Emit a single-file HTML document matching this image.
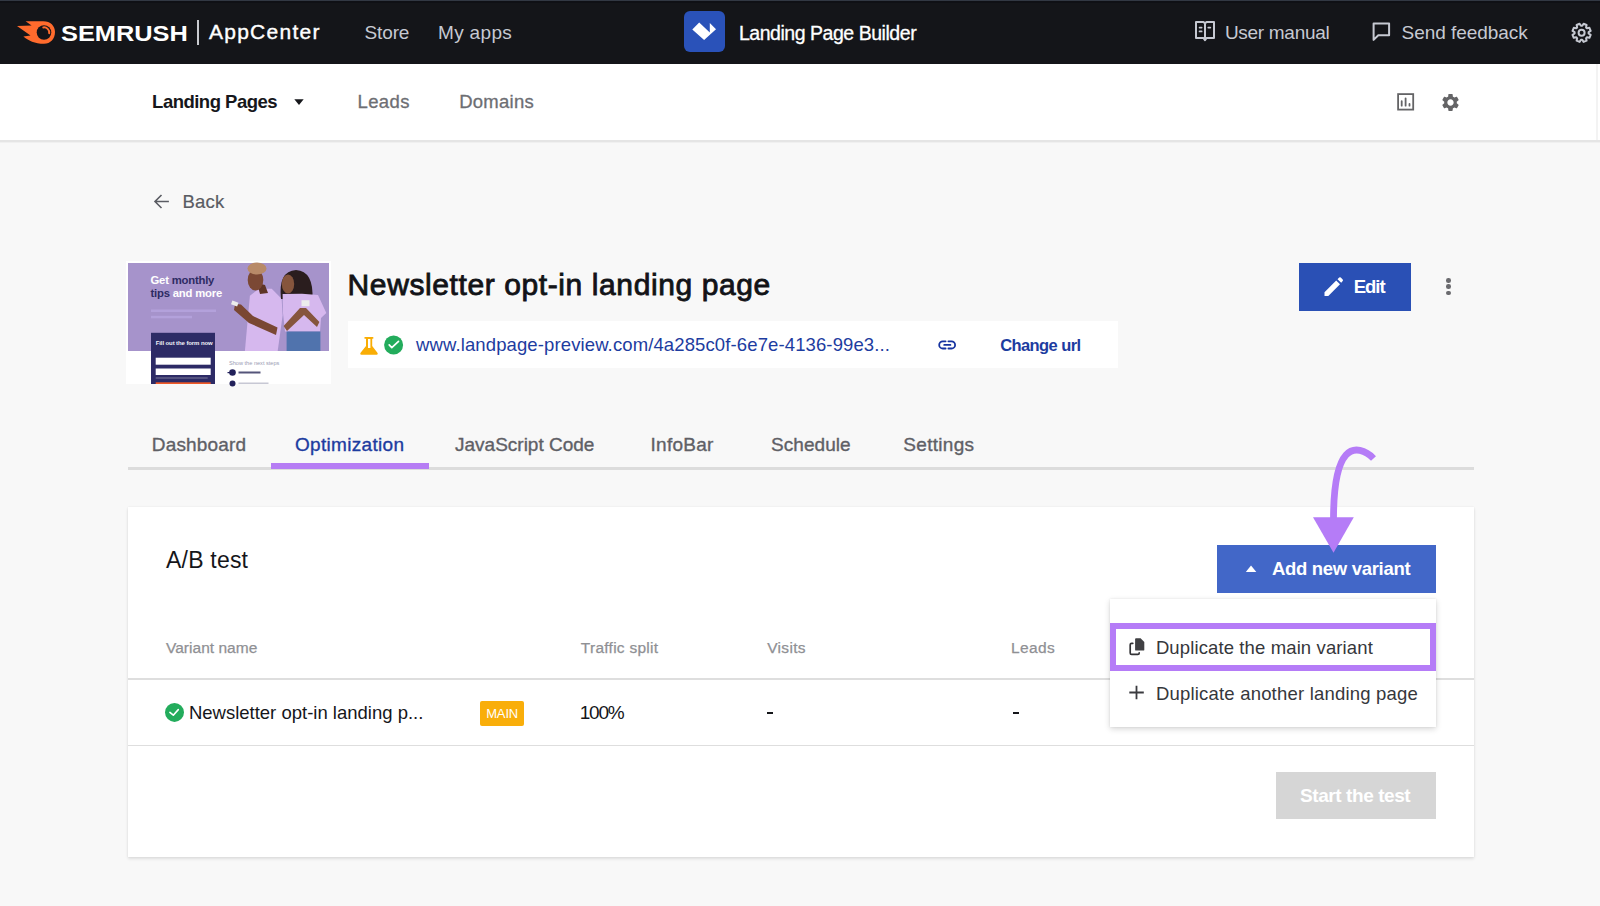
<!DOCTYPE html>
<html><head><meta charset="utf-8">
<style>
*{margin:0;padding:0;box-sizing:border-box}
html,body{width:1600px;height:906px;overflow:hidden;background:#f8f8f8;font-family:"Liberation Sans",sans-serif;position:relative}
.a{position:absolute}
.t{position:absolute;white-space:nowrap;line-height:1}
svg{position:absolute;overflow:visible}
</style></head><body>
<!-- top bar -->
<div class="a" style="left:0;top:0;width:1600px;height:64px;background:#141519"></div>
<div class="a" style="left:0;top:0;width:1600px;height:1px;background:#323843"></div>
<div class="a" style="left:0;top:1px;width:1600px;height:2px;background:#0f1015"></div>
<svg style="left:0;top:0" width="70" height="64" viewBox="0 0 70 64">
  <path d="M25.6 21.3 L43.3 21.3 C50.5 21.3 55 26 55 32 C55 38.8 50.5 43.8 44 43.8 C35 43.8 28 40.5 23.4 36.5 L30.5 35.6 L17 26.1 L31.6 25.6 Z" fill="#ff6b2d"/>
  <circle cx="44" cy="32.5" r="7.3" fill="#141519"/>
  <path d="M43.3 27.4 A5.2 5.2 0 0 1 49.2 33.2" stroke="#ff6b2d" stroke-width="2" fill="none" stroke-linecap="round"/>
</svg>
<div class="a" style="left:197px;top:20px;width:2px;height:25px;background:#c9cbd0"></div>
<!-- app icon -->
<div class="a" style="left:684px;top:11px;width:41px;height:41px;background:#2a52b9;border-radius:6px"></div>
<svg style="left:0;top:0" width="1" height="1">
  <path d="M692.3 29.4 L699.2 22.5 L709.8 32.6 L709.8 22.9 L716 29.2 L704.1 39.9 Z" fill="#fff"/>
</svg>
<!-- book icon -->
<svg style="left:0;top:0" width="1" height="1">
  <path d="M1196 22.1 H1203.5 L1205 23.3 L1206.5 22.1 H1214 V37.9 H1206.6 L1205 40.2 L1203.4 37.9 H1196 Z M1205 23.3 V38.3" fill="none" stroke="#c6c9d2" stroke-width="2" stroke-linejoin="round"/>
  <path d="M1199.6 27.6 H1201.6 M1199.6 31.4 H1201.6 M1208.3 27.6 H1210.3" stroke="#c6c9d2" stroke-width="1.8" stroke-linecap="round"/>
</svg>
<!-- chat icon -->
<svg style="left:0;top:0" width="1" height="1">
  <path d="M1373.6 23.6 H1389.1 V35.3 H1378.3 L1373.6 39.9 Z" fill="none" stroke="#c6c9d2" stroke-width="2" stroke-linejoin="round"/>
</svg>
<!-- gear top -->
<svg style="left:0;top:0" width="1" height="1">
  <path d="M1588.57 33.47 L1590.68 34.81 L1589.44 37.80 L1587.00 37.25 A7.00 7.00 0 0 1 1586.05 38.20 L1586.60 40.64 L1583.61 41.88 L1582.27 39.77 A7.00 7.00 0 0 1 1580.93 39.77 L1579.59 41.88 L1576.60 40.64 L1577.15 38.20 A7.00 7.00 0 0 1 1576.20 37.25 L1573.76 37.80 L1572.52 34.81 L1574.63 33.47 A7.00 7.00 0 0 1 1574.63 32.13 L1572.52 30.79 L1573.76 27.80 L1576.20 28.35 A7.00 7.00 0 0 1 1577.15 27.40 L1576.60 24.96 L1579.59 23.72 L1580.93 25.83 A7.00 7.00 0 0 1 1582.27 25.83 L1583.61 23.72 L1586.60 24.96 L1586.05 27.40 A7.00 7.00 0 0 1 1587.00 28.35 L1589.44 27.80 L1590.68 30.79 L1588.57 32.13 A7.00 7.00 0 0 1 1588.57 33.47 Z" fill="none" stroke="#c6c9d2" stroke-width="2" stroke-linejoin="round"/>
  <circle cx="1581.6" cy="32.8" r="3" fill="none" stroke="#c6c9d2" stroke-width="2"/>
</svg>

<!-- nav bar -->
<div class="a" style="left:0;top:64px;width:1600px;height:76px;background:#fff"></div>
<div class="a" style="left:0;top:140px;width:1600px;height:2px;background:#e5e5e5"></div>
<div class="a" style="left:0;top:142px;width:1600px;height:1px;background:#f0f0f0"></div>
<div class="a" style="left:1596px;top:64px;width:2px;height:76px;background:#f3f3f3"></div>
<svg style="left:0;top:0" width="1" height="1">
  <path d="M294.3 99.2 H303.7 L299 105 Z" fill="#16171b"/>
</svg>
<!-- chart icon -->
<svg style="left:0;top:0" width="1" height="1">
  <rect x="1398.1" y="94.1" width="15.1" height="15.5" fill="none" stroke="#646466" stroke-width="1.8"/>
  <path d="M1401.7 101.2 V105.7 M1405.6 98.3 V105.7 M1409.5 104 V105.7" stroke="#646466" stroke-width="1.8" stroke-linecap="round"/>
</svg>
<!-- gear nav -->
<svg style="left:1440.3px;top:91.9px" width="21" height="21" viewBox="0 0 24 24">
  <path d="M19.14 12.94c.04-.3.06-.61.06-.94 0-.32-.02-.64-.07-.94l2.03-1.58c.18-.14.23-.41.12-.61l-1.92-3.32c-.12-.22-.37-.29-.59-.22l-2.39.96c-.5-.38-1.03-.7-1.62-.94l-.36-2.54c-.04-.24-.24-.41-.48-.41h-3.84c-.24 0-.43.17-.47.41l-.36 2.54c-.59.24-1.13.57-1.62.94l-2.39-.96c-.22-.08-.47 0-.59.22L2.74 8.87c-.12.21-.08.47.12.61l2.03 1.58c-.05.3-.09.63-.09.94s.02.64.07.94l-2.03 1.58c-.18.14-.23.41-.12.61l1.92 3.32c.12.22.37.29.59.22l2.39-.96c.5.38 1.03.7 1.62.94l.36 2.54c.05.24.24.41.48.41h3.84c.24 0 .44-.17.47-.41l.36-2.54c.59-.24 1.13-.56 1.62-.94l2.39.96c.22.08.47 0 .59-.22l1.92-3.32c.12-.22.07-.47-.12-.61l-2.01-1.58zM12 15.6c-1.98 0-3.6-1.62-3.6-3.6s1.62-3.6 3.6-3.6 3.6 1.62 3.6 3.6-1.62 3.6-3.6 3.6z" fill="#646466"/>
</svg>

<!-- back arrow -->
<svg style="left:0;top:0" width="1" height="1">
  <path d="M168.9 201.5 H155 M161.5 195 L155 201.5 L161.5 208" fill="none" stroke="#5a5c63" stroke-width="1.6"/>
</svg>

<!-- thumbnail -->
<div class="a" style="left:126px;top:261px;width:204.5px;height:123px;background:#fff"></div>
<svg style="left:128px;top:263px" width="201" height="121" viewBox="0 0 201 121">
  <rect x="0" y="0" width="201" height="121" fill="#fff"/>
  <rect x="0" y="0" width="201" height="88" fill="#a693cb"/>
  <text x="22.5" y="20.5" font-family="Liberation Sans" font-weight="bold" font-size="11.3" fill="#fff" letter-spacing="-0.2">Get <tspan fill="#2e2b63">monthly</tspan></text>
  <text x="22.5" y="34" font-family="Liberation Sans" font-weight="bold" font-size="11.3" fill="#2e2b63" letter-spacing="-0.2">tips <tspan fill="#fff">and more</tspan></text>
  <rect x="23" y="46.5" width="65" height="2.5" fill="#b3a1db"/>
  <rect x="23" y="52.8" width="41" height="2.5" fill="#b3a1db"/>
  <!-- man -->
  <path d="M121.9 32.8 L130.8 25.8 L143.7 25.8 L153.6 35.7 L154.6 52.6 L149.7 88 L116.9 88 L119.9 54.6 Z" fill="#d6b8ee"/>
  <path d="M129 20 L137 22 L140 30 L132 31 Z" fill="#5e3526"/>
  <ellipse cx="127.5" cy="17" rx="7.8" ry="10.5" fill="#7b4834"/>
  <ellipse cx="129" cy="5.5" rx="9.5" ry="6" fill="#b88a68"/>
  <path d="M107 41 L113 41.5 L125 53 L149.5 64.5 L148 72 L121 60 L106 47 Z" fill="#7a4733"/>
  <rect x="103.5" y="38.5" width="6.5" height="4" fill="#ececec" transform="rotate(20 106.75 40.5)"/>
  <!-- woman -->
  <path d="M153 36 Q150 8 168 7 Q186 8 184.4 36.7 Z" fill="#2a1d1e"/>
  <path d="M154.6 31 L174 30.8 L190 32 L198.3 50 L193 55 L192 68.5 L157 68.5 L155 50 Z" fill="#d6b8ee"/>
  <ellipse cx="160" cy="21" rx="6.2" ry="9.5" fill="#86553d"/>
  <rect x="158.6" y="68.5" width="33.8" height="19.5" fill="#5073ad"/>
  <path d="M155.6 63 L172 45 L178 45 L191.4 59 L189 64 L176 52 L159 68 Z" fill="#86553d"/>
  <rect x="173.5" y="37.2" width="8" height="6" fill="#ececec"/>
  <!-- form -->
  <rect x="23" y="69.8" width="64" height="51.2" fill="#2d2b66"/>
  <text x="27.7" y="82" font-family="Liberation Sans" font-weight="bold" font-size="6" fill="#f2f2f8" letter-spacing="-0.1">Fill out the form now</text>
  <rect x="27.7" y="94.7" width="55" height="7" fill="#fff"/>
  <rect x="27.7" y="105.5" width="55" height="6.5" fill="#fff"/>
  <rect x="27.7" y="114" width="52" height="2" fill="#54527f"/>
  <rect x="27.7" y="119.3" width="55" height="1.7" fill="#f05a28"/>
  <text x="101" y="101.5" font-family="Liberation Sans" font-size="5.6" fill="#9a9cb3">Show the next steps</text>
  <circle cx="104.5" cy="109.5" r="3.3" fill="#22215a"/>
  <rect x="99.5" y="109" width="3" height="1.2" fill="#22215a"/>
  <rect x="110.5" y="108.5" width="22" height="2" fill="#55557a"/>
  <circle cx="104.5" cy="120.5" r="3" fill="#22215a"/>
  <rect x="110.5" y="119.5" width="30" height="1.5" fill="#c7c8d4"/>
</svg>

<!-- url box -->
<div class="a" style="left:348px;top:321px;width:770px;height:47px;background:#fff"></div>
<svg style="left:0;top:0" width="1" height="1">
  <path d="M364.5 337 H373.3 V338.7 H372.2 V346 L377.6 353 Q378.4 354.7 376.6 354.7 H361.4 Q359.6 354.7 360.4 353 L366 346 V338.7 H364.5 Z M368 338.9 V347.9 H370.4 V338.9 Z" fill="#f9ad05" fill-rule="evenodd"/>
  <circle cx="393.6" cy="345" r="9.5" fill="#23ac5c"/>
  <path d="M389.2 344.9 L391.8 347.7 L398.5 341.4" fill="none" stroke="#fff" stroke-width="1.7" stroke-linecap="round" stroke-linejoin="round"/>
  <!-- link icon -->
  <path d="M945.6 341.3 H942.8 A3.6 3.6 0 0 0 942.8 348.5 H945.6 M948.4 341.3 H951.5 A3.6 3.6 0 0 1 951.5 348.5 H948.4 M944.2 344.9 H950.4" fill="none" stroke="#1533a0" stroke-width="1.8" stroke-linecap="round"/>
</svg>

<!-- edit button -->
<div class="a" style="left:1299px;top:263px;width:112px;height:48px;background:#2a50b5"></div>
<svg style="left:0;top:0" width="1" height="1">
  <path d="M1324.5 296 L1324.5 292.2 L1336.2 280.5 L1340 284.3 L1328.3 296 Z M1337.5 279.2 L1339.2 277.5 Q1340 276.8 1340.8 277.5 L1342.7 279.4 Q1343.4 280.2 1342.7 281 L1341.2 282.7 Z" fill="#fff"/>
</svg>
<div class="a" style="left:1446.3px;top:278px;width:4.6px;height:4.6px;border-radius:50%;background:#6a6a6e"></div>
<div class="a" style="left:1446.3px;top:284.4px;width:4.6px;height:4.6px;border-radius:50%;background:#6a6a6e"></div>
<div class="a" style="left:1446.3px;top:290.7px;width:4.6px;height:4.6px;border-radius:50%;background:#6a6a6e"></div>

<!-- tabs -->
<div class="a" style="left:128px;top:467px;width:1346px;height:2.5px;background:#dcdcdc"></div>
<div class="a" style="left:271px;top:463px;width:158px;height:6px;background:#b67df4"></div>

<!-- card -->
<div class="a" style="left:128px;top:507px;width:1346px;height:350px;background:#fff;box-shadow:0 2px 3px rgba(0,0,0,.10),0 0 2px rgba(0,0,0,.07)"></div>
<div class="a" style="left:128px;top:678px;width:1346px;height:1.5px;background:#dedede"></div>
<div class="a" style="left:128px;top:744.5px;width:1346px;height:1.5px;background:#dedede"></div>
<!-- add variant btn -->
<div class="a" style="left:1217px;top:545px;width:219px;height:47.5px;background:#4267c8"></div>
<svg style="left:0;top:0" width="1" height="1">
  <path d="M1245.8 571.9 L1251 565.6 L1256.3 571.9 Z" fill="#fff"/>
</svg>
<!-- check row -->
<svg style="left:0;top:0" width="1" height="1">
  <circle cx="174.5" cy="712.4" r="9.5" fill="#23ac5c"/>
  <path d="M169.9 712.4 L173.3 715.2 L178.3 709.6" fill="none" stroke="#fff" stroke-width="1.6" stroke-linecap="round" stroke-linejoin="round"/>
</svg>
<div class="a" style="left:480px;top:701px;width:44px;height:25px;background:#f9ae0a;border-radius:2px"></div>
<div class="t" style="left:486.2px;top:707px;font-size:13px;color:#fff;letter-spacing:-0.15px">MAIN</div>
<div class="a" style="left:767.3px;top:712px;width:6px;height:2px;background:#15161a"></div>
<div class="a" style="left:1012.5px;top:712px;width:6px;height:2px;background:#15161a"></div>
<!-- start test btn -->
<div class="a" style="left:1275.5px;top:771.5px;width:160.5px;height:47px;background:#d6d6d6"></div>

<!-- dropdown -->
<div class="a" style="left:1110px;top:598.5px;width:326px;height:128.5px;background:#fff;box-shadow:0 2px 6px rgba(0,0,0,.16),0 0 2px rgba(0,0,0,.08)"></div>
<div class="a" style="left:1110px;top:622.5px;width:326px;height:48.5px;border:6.5px solid #b57cf7"></div>
<svg style="left:0;top:0" width="1" height="1">
  <path d="M1136 638.3 H1140.6 L1144.3 642 V649.7 Q1144.3 650.6 1143.4 650.6 H1136 Q1135.1 650.6 1135.1 649.7 V639.2 Q1135.1 638.3 1136 638.3 Z" fill="#404043"/>
  <path d="M1132.8 643.3 H1131.6 Q1130.2 643.3 1130.2 644.7 V652.9 Q1130.2 654.3 1131.6 654.3 H1137.8 Q1139.2 654.3 1139.2 652.9" fill="none" stroke="#333336" stroke-width="1.7" stroke-linecap="round"/>
  <path d="M1129.3 692.5 H1143.8 M1136.5 685.7 V699.3" stroke="#3a3b3f" stroke-width="1.8"/>
</svg>

<!-- purple arrow -->
<svg style="left:0;top:0" width="1" height="1">
  <path d="M1373.5 458.5 C1366 450.5 1354 446 1346 455 C1337 465 1333.5 490 1333.5 520" fill="none" stroke="#b57cf7" stroke-width="6.8"/>
  <path d="M1313 517.2 H1353.8 L1333.5 552.7 Z" fill="#b57cf7"/>
</svg>

<div class="t" style="left:60.599999999999994px;top:23.8px;font-size:21.5px;letter-spacing:0px;color:#ffffff;font-weight:bold;transform:scaleX(1.18);transform-origin:0 0;">SEMRUSH</div>
<div class="t" style="left:209.0px;top:20.9px;font-size:21.0px;letter-spacing:1.25px;color:#ffffff;-webkit-text-stroke:0.4px #ffffff;">AppCenter</div>
<div class="t" style="left:364.5px;top:23.0px;font-size:19.0px;letter-spacing:-0.12px;color:#c6c9d2;">Store</div>
<div class="t" style="left:438.0px;top:23.0px;font-size:19.0px;letter-spacing:0.33px;color:#c6c9d2;">My apps</div>
<div class="t" style="left:738.9px;top:24.1px;font-size:19.5px;letter-spacing:-0.46px;color:#ffffff;-webkit-text-stroke:0.3px #ffffff;">Landing Page Builder</div>
<div class="t" style="left:1224.9px;top:23.1px;font-size:19.0px;letter-spacing:-0.29px;color:#c6c9d2;">User manual</div>
<div class="t" style="left:1401.6px;top:23.1px;font-size:19.0px;letter-spacing:-0.05px;color:#c6c9d2;">Send feedback</div>
<div class="t" style="left:152.1px;top:93.2px;font-size:18.5px;letter-spacing:-0.51px;color:#16171b;font-weight:bold;">Landing Pages</div>
<div class="t" style="left:357.6px;top:93.2px;font-size:18.5px;letter-spacing:0.35px;color:#6d6e73;-webkit-text-stroke:0.3px #6d6e73;">Leads</div>
<div class="t" style="left:459.2px;top:93.2px;font-size:18.5px;letter-spacing:0.25px;color:#6d6e73;-webkit-text-stroke:0.3px #6d6e73;">Domains</div>
<div class="t" style="left:182.5px;top:193.0px;font-size:18.5px;letter-spacing:0.17px;color:#5a5c63;-webkit-text-stroke:0.2px #5a5c63;">Back</div>
<div class="t" style="left:347.6px;top:270.1px;font-size:30.0px;letter-spacing:0.6px;color:#121317;-webkit-text-stroke:0.85px #121317;">Newsletter opt-in landing page</div>
<div class="t" style="left:416.0px;top:336.2px;font-size:18.5px;letter-spacing:0.12px;color:#1d3ca0;">www.landpage-preview.com/4a285c0f-6e7e-4136-99e3...</div>
<div class="t" style="left:1000.2px;top:337.2px;font-size:16.5px;letter-spacing:-0.58px;color:#1d3ca0;font-weight:bold;">Change url</div>
<div class="t" style="left:1353.7px;top:278.3px;font-size:18.5px;letter-spacing:-1.03px;color:#ffffff;font-weight:bold;">Edit</div>
<div class="t" style="left:151.8px;top:434.5px;font-size:19.0px;letter-spacing:0.15px;color:#5f6066;-webkit-text-stroke:0.35px #5f6066;">Dashboard</div>
<div class="t" style="left:295.0px;top:434.5px;font-size:19.0px;letter-spacing:0.31px;color:#1d3ca0;-webkit-text-stroke:0.35px #1d3ca0;">Optimization</div>
<div class="t" style="left:455.0px;top:434.5px;font-size:19.0px;letter-spacing:0.0px;color:#5f6066;-webkit-text-stroke:0.35px #5f6066;">JavaScript Code</div>
<div class="t" style="left:650.5px;top:434.5px;font-size:19.0px;letter-spacing:0.27px;color:#5f6066;-webkit-text-stroke:0.35px #5f6066;">InfoBar</div>
<div class="t" style="left:771.0px;top:434.5px;font-size:19.0px;letter-spacing:0.06px;color:#5f6066;-webkit-text-stroke:0.35px #5f6066;">Schedule</div>
<div class="t" style="left:903.3px;top:434.5px;font-size:19.0px;letter-spacing:0.3px;color:#5f6066;-webkit-text-stroke:0.35px #5f6066;">Settings</div>
<div class="t" style="left:166.0px;top:549.2px;font-size:23.0px;letter-spacing:0.21px;color:#15161a;">A/B test</div>
<div class="t" style="left:1272.0px;top:560.3px;font-size:18.5px;letter-spacing:-0.31px;color:#ffffff;font-weight:bold;">Add new variant</div>
<div class="t" style="left:166.0px;top:639.8px;font-size:15.5px;letter-spacing:0.02px;color:#8f9094;-webkit-text-stroke:0.25px #8f9094;">Variant name</div>
<div class="t" style="left:580.8px;top:639.8px;font-size:15.5px;letter-spacing:0.27px;color:#8f9094;-webkit-text-stroke:0.25px #8f9094;">Traffic split</div>
<div class="t" style="left:767.2px;top:639.8px;font-size:15.5px;letter-spacing:0.32px;color:#8f9094;-webkit-text-stroke:0.25px #8f9094;">Visits</div>
<div class="t" style="left:1011.0px;top:639.8px;font-size:15.5px;letter-spacing:0.35px;color:#8f9094;-webkit-text-stroke:0.25px #8f9094;">Leads</div>
<div class="t" style="left:188.9px;top:704.0px;font-size:18.5px;letter-spacing:0.0px;color:#15161a;">Newsletter opt-in landing p...</div>
<div class="t" style="left:579.8px;top:703.2px;font-size:19.0px;letter-spacing:-1.27px;color:#15161a;">100%</div>
<div class="t" style="left:1155.9px;top:638.8px;font-size:18.5px;letter-spacing:0.12px;color:#36373b;">Duplicate the main variant</div>
<div class="t" style="left:1155.9px;top:684.5px;font-size:18.5px;letter-spacing:0.2px;color:#36373b;">Duplicate another landing page</div>
<div class="t" style="left:1300.0px;top:785.7px;font-size:19.0px;letter-spacing:-0.42px;color:#ffffff;font-weight:bold;">Start the test</div>
</body></html>
